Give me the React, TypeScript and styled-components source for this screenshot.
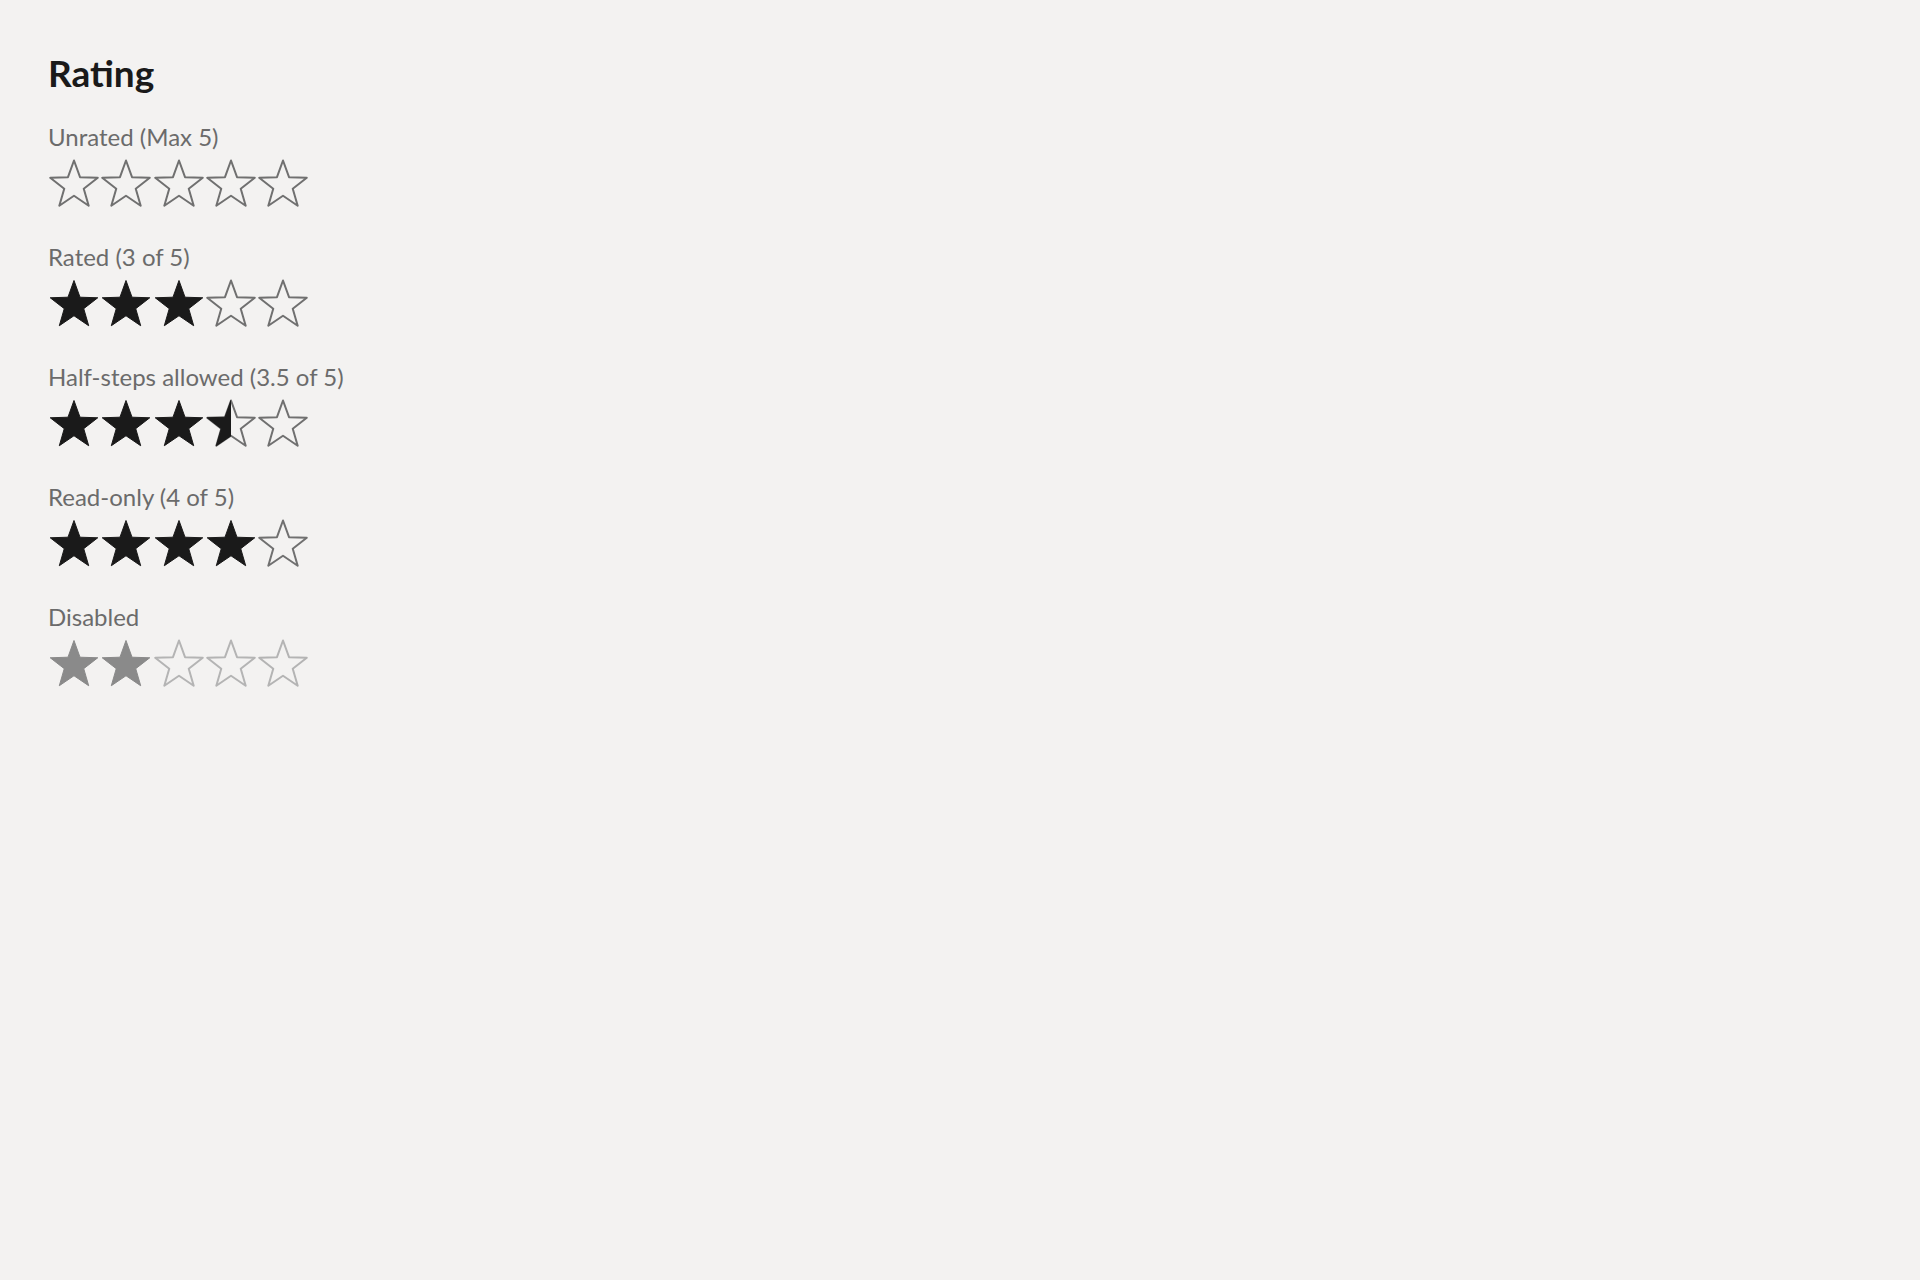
import React from 'react'
import styled, {createGlobalStyle} from 'styled-components'

const GlobalStyle = createGlobalStyle`
  html, body {
    margin: 0;
    padding: 0;
    background: #f3f2f1;
  }
  body {
    font-family: 'Segoe UI', Lato, 'Liberation Sans', sans-serif;
  }
`

const Page = styled.div`
  min-height: 1280px;
  padding: 51px 0 0 48px;
  box-sizing: border-box;
  display: flex;
  flex-direction: column;
`

const Title = styled.h1`
  margin: 0 0 26px 0;
  font-size: 37px;
  line-height: 44px;
  font-weight: 700;
  color: #1a1a1a;
`

const List = styled.div`
  display: flex;
  flex-direction: column;
  gap: 34px;
`

const Section = styled.div`
  display: flex;
  flex-direction: column;
  gap: 6px;
`

const Label = styled.div`
  font-size: 24px;
  line-height: 32px;
  color: #6b6b6b;
`

const Stars = styled.div`
  display: flex;
  height: 48px;
`

const StarBox = styled.svg`
  display: block;
  width: 52.3px;
  height: 48px;
  flex: none;
`

const STAR =
  '26,1.5 32.03,18.21 49.78,18.77 35.75,29.67 40.69,46.73 26,36.75 11.31,46.73 16.25,29.67 2.22,18.77 19.97,18.21'

type StarProps = {fill: number; disabled?: boolean; id: string}

const Star = ({fill, disabled, id}: StarProps) => {
  const solid = disabled ? '#8a8a8a' : '#1a1a1a'
  const line = disabled ? '#b4b4b4' : '#707070'
  return (
    <StarBox viewBox='0 0 52.3 48'>
      {fill < 1 && (
        <polygon points={STAR} fill='none' stroke={line} strokeWidth={2} strokeLinejoin='round' />
      )}
      {fill > 0 && (
        <>
          <clipPath id={id}>
            <rect x={0} y={0} width={fill >= 1 ? 52.3 : 26} height={48} />
          </clipPath>
          <polygon
            points={STAR}
            fill={solid}
            stroke={solid}
            strokeWidth={1}
            strokeLinejoin='round'
            clipPath={`url(#${id})`}
          />
        </>
      )}
    </StarBox>
  )
}

const Rating = ({value, disabled, name}: {value: number; disabled?: boolean; name: string}) => (
  <Stars>
    {[0, 1, 2, 3, 4].map((i) => (
      <Star
        key={i}
        id={`${name}-${i}`}
        disabled={disabled}
        fill={Math.max(0, Math.min(1, value - i))}
      />
    ))}
  </Stars>
)

const rows = [
  {label: 'Unrated (Max 5)', value: 0},
  {label: 'Rated (3 of 5)', value: 3},
  {label: 'Half-steps allowed (3.5 of 5)', value: 3.5},
  {label: 'Read-only (4 of 5)', value: 4},
  {label: 'Disabled', value: 2, disabled: true},
]

export default function App() {
  return (
    <>
      <GlobalStyle />
      <Page>
        <Title>Rating</Title>
        <List>
          {rows.map((r, i) => (
            <Section key={r.label}>
              <Label>{r.label}</Label>
              <Rating name={`r${i}`} value={r.value} disabled={r.disabled} />
            </Section>
          ))}
        </List>
      </Page>
    </>
  )
}
